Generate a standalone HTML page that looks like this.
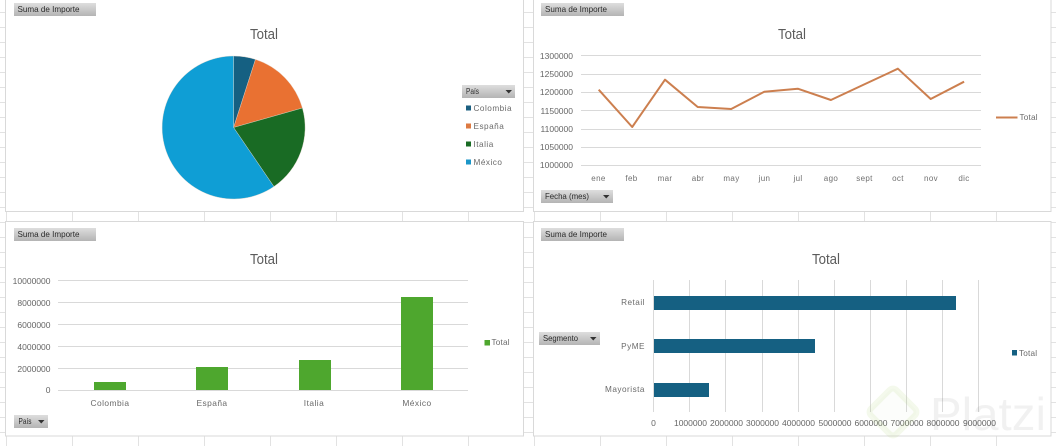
<!DOCTYPE html>
<html><head><meta charset="utf-8"><style>
html,body{margin:0;padding:0;background:#fff;width:1056px;height:446px;overflow:hidden}
svg{display:block;filter:blur(.3px)}
text{font-family:"Liberation Sans",sans-serif;fill:#616161}
.t{font-size:14.5px;text-anchor:middle;fill:#5c5c5c}
.n{font-size:8.5px;text-anchor:end;fill:#666}
.m{font-size:8px;text-anchor:middle;letter-spacing:.35px;fill:#707070}
.c{font-size:8.4px;text-anchor:middle;letter-spacing:.45px;fill:#6a6a6a}
.l{font-size:8.2px;letter-spacing:.5px;fill:#6a6a6a}
.b{font-size:8.4px;fill:#2a2a2a}
.g{stroke:#d9d9d9;stroke-width:1;fill:none}
.p{fill:#fff;stroke:#d9d9d9;stroke-width:1}
</style></head><body>
<svg width="1056" height="446" viewBox="0 0 1056 446" xmlns="http://www.w3.org/2000/svg">
<defs><linearGradient id="bg" x1="0" y1="0" x2="0" y2="1"><stop offset="0" stop-color="#dedede"/><stop offset="1" stop-color="#b4b4b4"/></linearGradient></defs>
<rect width="1056" height="446" fill="#fff"/>
<!-- sheet grid -->
<path stroke="#e2e2e2" stroke-width="1" fill="none" d="M0 12.5H1056M0 27.5H1056M0 42.5H1056M0 57.5H1056M0 72.5H1056M0 87.5H1056M0 102.5H1056M0 117.5H1056M0 132.5H1056M0 147.5H1056M0 162.5H1056M0 177.5H1056M0 192.5H1056M0 207.5H1056M0 222.5H1056M0 237.5H1056M0 252.5H1056M0 267.5H1056M0 282.5H1056M0 297.5H1056M0 312.5H1056M0 327.5H1056M0 342.5H1056M0 357.5H1056M0 372.5H1056M0 387.5H1056M0 402.5H1056M0 417.5H1056M0 432.5H1056"/>
<path stroke="#e2e2e2" stroke-width="1" fill="none" d="M6.5 0V446M72.5 0V446M138.5 0V446M204.5 0V446M270.5 0V446M336.5 0V446M402.5 0V446M468.5 0V446M534.5 0V446M600.5 0V446M666.5 0V446M732.5 0V446M798.5 0V446M864.5 0V446M930.5 0V446M996.5 0V446"/>
<!-- panels -->
<rect class="p" x="5.5" y="-2" width="518" height="213.5"/>
<rect class="p" x="533.5" y="-2" width="517.5" height="213.5"/>
<rect class="p" x="5.5" y="221.5" width="518" height="214.5"/>
<rect class="p" x="533.5" y="221.5" width="517.5" height="214.5"/>

<!-- top-left pie -->
<rect x="14" y="3" width="82" height="13" fill="url(#bg)"/>
<text class="b" x="17.5" y="12" textLength="62" lengthAdjust="spacingAndGlyphs">Suma de Importe</text>
<text class="t" x="264" y="39" textLength="28" lengthAdjust="spacingAndGlyphs">Total</text>
<g stroke="#e4d8cc" stroke-width=".4">
<path fill="#156082" d="M233.6 127.5L233.6 56A71.5 71.5 0 0 1 255.46 59.42Z"/>
<path fill="#e97132" d="M233.6 127.5L255.46 59.42A71.5 71.5 0 0 1 302.4 108.03Z"/>
<path fill="#196b24" d="M233.6 127.5L302.4 108.03A71.5 71.5 0 0 1 273.89 186.57Z"/>
<path fill="#0f9ed5" d="M233.6 127.5L273.89 186.57A71.5 71.5 0 1 1 233.6 56Z"/>
</g>
<rect x="462" y="85" width="53" height="13" fill="url(#bg)"/>
<text class="b" x="466" y="94" textLength="13" lengthAdjust="spacingAndGlyphs">País</text>
<path fill="#333" d="M505.5 90H512L508.75 93.5Z"/>
<rect x="466" y="105.5" width="5" height="5" fill="#1b5f80"/><text class="l" x="473.5" y="111">Colombia</text>
<rect x="466" y="123.5" width="5" height="5" fill="#dd7a42"/><text class="l" x="473.5" y="129">España</text>
<rect x="466" y="141.5" width="5" height="5" fill="#196b24"/><text class="l" x="473.5" y="147">Italia</text>
<rect x="466" y="159.5" width="5" height="5" fill="#1b96c8"/><text class="l" x="473.5" y="165">México</text>

<!-- top-right line -->
<rect x="541" y="3" width="83" height="13" fill="url(#bg)"/>
<text class="b" x="545" y="12" textLength="62" lengthAdjust="spacingAndGlyphs">Suma de Importe</text>
<text class="t" x="792" y="39" textLength="28" lengthAdjust="spacingAndGlyphs">Total</text>
<path class="g" d="M581 55.5H981M581 74.5H981M581 92.5H981M581 110.5H981M581 129.5H981M581 147.5H981M581 165.5H981"/>
<g>
<text class="n" x="573" y="59">1300000</text>
<text class="n" x="573" y="77">1250000</text>
<text class="n" x="573" y="95">1200000</text>
<text class="n" x="573" y="114">1150000</text>
<text class="n" x="573" y="132">1100000</text>
<text class="n" x="573" y="150">1050000</text>
<text class="n" x="573" y="168">1000000</text>
</g>
<path fill="none" stroke="#cc7f4f" stroke-width="2" stroke-linejoin="round" d="M598.7 89.7L632.2 127L665 79.7L697.7 107L731.2 109L764.3 91.7L797.8 88.7L830.9 100L864 84.5L897.9 68.7L930.7 99L964.1 81.7"/>
<g>
<text class="m" x="598.5" y="181">ene</text><text class="m" x="631.5" y="181">feb</text><text class="m" x="665" y="181">mar</text><text class="m" x="698" y="181">abr</text><text class="m" x="731.5" y="181">may</text><text class="m" x="764.5" y="181">jun</text><text class="m" x="798" y="181">jul</text><text class="m" x="831" y="181">ago</text><text class="m" x="864.5" y="181">sept</text><text class="m" x="898" y="181">oct</text><text class="m" x="931" y="181">nov</text><text class="m" x="964" y="181">dic</text>
</g>
<rect x="541" y="190" width="72" height="13" fill="url(#bg)"/>
<text class="b" x="545" y="199" textLength="44" lengthAdjust="spacingAndGlyphs">Fecha (mes)</text>
<path fill="#333" d="M603 195H609.5L606.25 198.5Z"/>
<path stroke="#cc7f4f" stroke-width="2" d="M996 117.5H1017.5"/>
<text class="l" x="1019.5" y="120" style="letter-spacing:.2px">Total</text>

<!-- bottom-left bars -->
<rect x="14" y="228" width="82" height="13" fill="url(#bg)"/>
<text class="b" x="17.5" y="237" textLength="62" lengthAdjust="spacingAndGlyphs">Suma de Importe</text>
<text class="t" x="264" y="264" textLength="28" lengthAdjust="spacingAndGlyphs">Total</text>
<path class="g" d="M58 280.5H468M58 302.5H468M58 324.5H468M58 346.5H468M58 368.5H468M58 390.5H468"/>
<g>
<text class="n" x="50.5" y="284">10000000</text>
<text class="n" x="50.5" y="306">8000000</text>
<text class="n" x="50.5" y="328">6000000</text>
<text class="n" x="50.5" y="350">4000000</text>
<text class="n" x="50.5" y="372">2000000</text>
<text class="n" x="50.5" y="393">0</text>
</g>
<rect x="94" y="382" width="32" height="8" fill="#4ea72e"/>
<rect x="196" y="367" width="32" height="23" fill="#4ea72e"/>
<rect x="299" y="360" width="32" height="30" fill="#4ea72e"/>
<rect x="401" y="297" width="32" height="93" fill="#4ea72e"/>
<text class="c" x="110" y="406">Colombia</text>
<text class="c" x="212" y="406">España</text>
<text class="c" x="314" y="406">Italia</text>
<text class="c" x="417" y="406">México</text>
<rect x="484.5" y="340" width="5.5" height="5.5" fill="#4ea72e"/>
<text class="l" x="491.5" y="345" style="letter-spacing:.2px">Total</text>
<rect x="14" y="415" width="34" height="13" fill="url(#bg)"/>
<text class="b" x="18.5" y="424" textLength="13" lengthAdjust="spacingAndGlyphs">País</text>
<path fill="#333" d="M38 420H44.5L41.25 423.5Z"/>

<!-- bottom-right hbars -->
<rect x="541" y="228" width="83" height="13" fill="url(#bg)"/>
<text class="b" x="545" y="237" textLength="62" lengthAdjust="spacingAndGlyphs">Suma de Importe</text>
<text class="t" x="826" y="264" textLength="28" lengthAdjust="spacingAndGlyphs">Total</text>
<path class="g" d="M653.5 280V412M689.5 280V412M725.5 280V412M762.5 280V412M798.5 280V412M834.5 280V412M870.5 280V412M906.5 280V412M942.5 280V412M978.5 280V412"/>
<rect x="654" y="296" width="302" height="14" fill="#156082"/>
<rect x="654" y="339" width="161" height="14" fill="#156082"/>
<rect x="654" y="383" width="55" height="14" fill="#156082"/>
<text class="l" x="645" y="305" text-anchor="end">Retail</text>
<text class="l" x="645" y="349" text-anchor="end">PyME</text>
<text class="l" x="645" y="392" text-anchor="end">Mayorista</text>
<rect x="539" y="332" width="61" height="13" fill="url(#bg)"/>
<text class="b" x="543" y="341" textLength="35" lengthAdjust="spacingAndGlyphs">Segmento</text>
<path fill="#333" d="M590 337H596.5L593.25 340.5Z"/>
<g>
<text class="n" style="text-anchor:middle" x="653.5" y="426">0</text>
<text class="n" style="text-anchor:middle" x="690.5" y="426" textLength="33">1000000</text>
<text class="n" style="text-anchor:middle" x="726.5" y="426" textLength="33">2000000</text>
<text class="n" style="text-anchor:middle" x="762.5" y="426" textLength="33">3000000</text>
<text class="n" style="text-anchor:middle" x="798.5" y="426" textLength="33">4000000</text>
<text class="n" style="text-anchor:middle" x="835" y="426" textLength="33">5000000</text>
<text class="n" style="text-anchor:middle" x="871" y="426" textLength="33">6000000</text>
<text class="n" style="text-anchor:middle" x="907" y="426" textLength="33">7000000</text>
<text class="n" style="text-anchor:middle" x="943" y="426" textLength="33">8000000</text>
<text class="n" style="text-anchor:middle" x="979.5" y="426" textLength="33">9000000</text>
</g>
<rect x="1012" y="350" width="5" height="5.5" fill="#156082"/>
<text class="l" x="1019" y="356" style="letter-spacing:.2px">Total</text>

<!-- watermark -->
<rect x="875" y="394" width="36" height="36" rx="5" transform="rotate(45 893 412)" fill="#a8cf70" fill-opacity=".03" stroke="#a8cf70" stroke-opacity=".13" stroke-width="6"/>
<text x="930" y="430" style="font-size:46px;fill:#000;fill-opacity:.055" textLength="116" lengthAdjust="spacingAndGlyphs">Platzi</text>
</svg>
</body></html>
